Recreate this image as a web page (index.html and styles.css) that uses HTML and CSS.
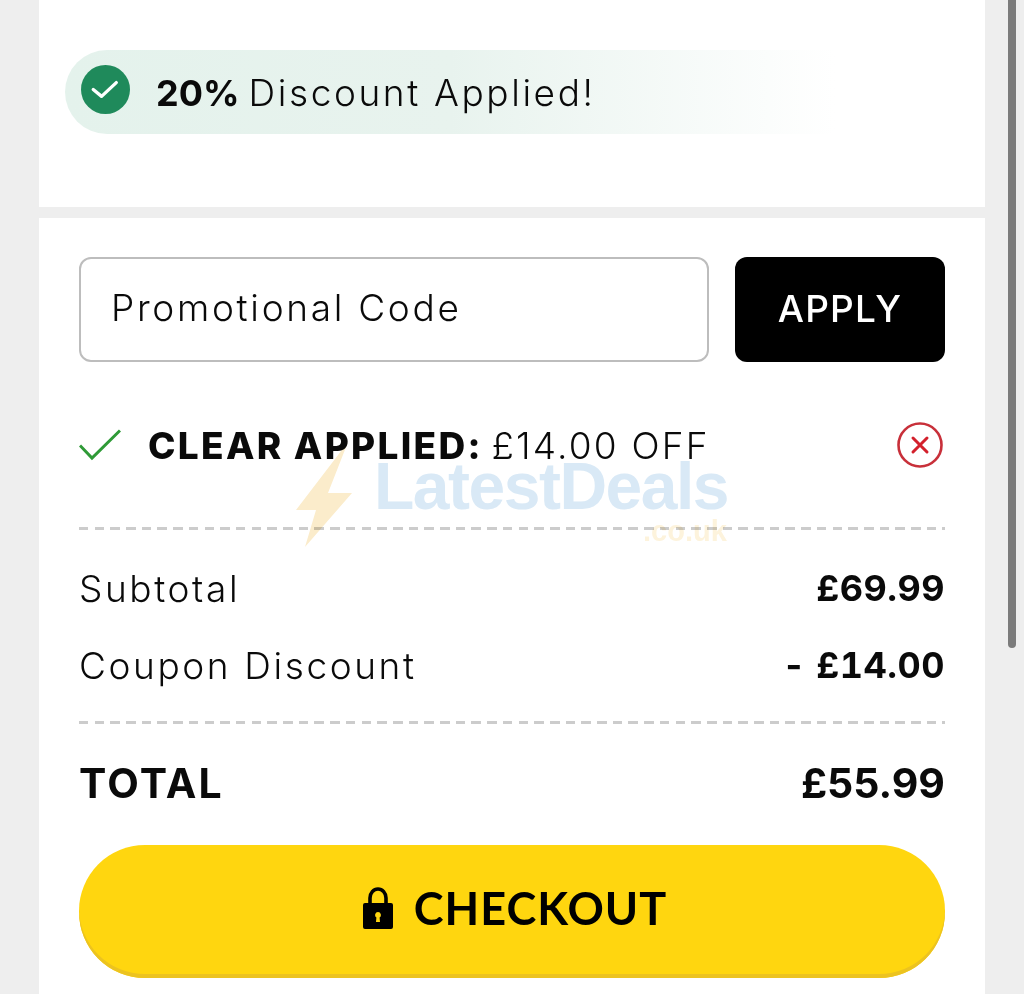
FILE: index.html
```html
<!DOCTYPE html>
<html lang="en">
<head>
<meta charset="utf-8">
<title>Basket</title>
<link rel="stylesheet" href="styles.css">
</head>
<body>
<main class="page">
  <section class="card card-top">
    <div class="discount-pill">
      <svg class="pill-icon" viewBox="0 0 50 50" aria-hidden="true">
        <circle cx="25" cy="25" r="25" fill="#1f8a5b"/>
        <path d="M12.500 25L21 32l15-14" fill="none" stroke="#fff" stroke-width="3.400" stroke-linecap="round" stroke-linejoin="round"/>
      </svg>
      <span class="pill-text"><b>20%</b> Discount Applied!</span>
    </div>
  </section>

  <section class="card card-summary">
    <div class="promo-row">
      <div class="promo-input">Promotional Code</div>
      <button class="promo-apply" type="button">APPLY</button>
    </div>

    <div class="applied-row">
      <svg class="applied-tick" viewBox="0 0 42 32" aria-hidden="true">
        <path d="M1 16.500L13 29 41 1.500" fill="none" stroke="#2f9a37" stroke-width="3"/>
      </svg>
      <span class="applied-text"><b>CLEAR APPLIED:</b> £14.00 OFF</span>
      <svg class="applied-remove" viewBox="0 0 46 46" aria-hidden="true">
        <circle cx="23" cy="23" r="21.500" fill="none" stroke="#c8303a" stroke-width="2.600"/>
        <path d="M16 16l14 14M30 16L16 30" fill="none" stroke="#d3202c" stroke-width="3" stroke-linecap="round"/>
      </svg>
    </div>

    <div class="rule rule-first"></div>

    <div class="line line-subtotal"><span>Subtotal</span><b>£69.99</b></div>
    <div class="line line-coupon"><span>Coupon Discount</span><b>- £14.00</b></div>

    <div class="rule rule-second"></div>

    <div class="total"><b class="total-label">TOTAL</b><b>£55.99</b></div>

    <button class="checkout" type="button">
      <svg class="lock" viewBox="0 0 30 42" aria-hidden="true">
        <path d="M7 18V11a8 9 0 0 1 16 0v7" fill="none" stroke="#000" stroke-width="3.600"/>
        <path fill-rule="evenodd" d="M2 16h26a2 2 0 0 1 2 2v22a2 2 0 0 1-2 2H2a2 2 0 0 1-2-2V18a2 2 0 0 1 2-2zm13 9a3 3 0 0 0-1.600 5.500L13 35h4l-.4-4.500A3 3 0 0 0 15 25z" fill="#000"/>
      </svg>
      <span>CHECKOUT</span>
    </button>
  </section>
</main>

<div class="watermark" aria-hidden="true">
  <svg class="wm-bolt" viewBox="0 0 58 106">
    <path d="M53 0L1 68h20L10 105 57 51H33z" fill="#fbeccb"/>
  </svg>
  <div class="wm-name">LatestDeals</div>
  <div class="wm-domain">.co.uk</div>
</div>

<div class="scroll-thumb"></div>
</body>
</html>
```

FILE: styles.css
```css
* {
  box-sizing: border-box;
}

html,
body {
  margin: 0;
  height: 994px;
  overflow: hidden;
}

body {
  background: #eeeeee;
  color: #0a0a0a;
  font-family: "Inter", "Noto Sans", sans-serif;
  position: relative;
}

b {
  font-weight: 700;
}

.page {
  padding: 0 39px;
  display: flex;
  flex-direction: column;
  gap: 11px;
}

.card {
  background: #fff;
}

/* Discount banner */
.card-top {
  height: 207px;
  padding: 50px 0 0 26px;
}

.discount-pill {
  width: 770px;
  height: 84px;
  border-radius: 42px 0 0 42px;
  background: linear-gradient(90deg, #e4f2ec 0%, #e8f3ee 50%, #ffffff 100%);
  display: flex;
  align-items: center;
  gap: 26px;
  padding-left: 16px;
}

.pill-icon {
  width: 49px;
  height: 49px;
  flex: none;
  margin-bottom: 5px;
}

.pill-text {
  font-size: 37px;
  font-weight: 300;
  letter-spacing: 2.6px;
  white-space: nowrap;
}

.pill-text b {
  font-size: 36px;
  letter-spacing: 0;
  margin-right: -4px;
}

/* Promo code */
.card-summary {
  height: 776px;
  padding: 39px 40px 0;
  display: flex;
  flex-direction: column;
}

.promo-row {
  display: flex;
  justify-content: space-between;
  height: 105px;
}

.promo-input {
  width: 630px;
  border: 2px solid #bdbdbd;
  border-radius: 12px;
  display: flex;
  align-items: center;
  padding: 0 0 4px 30px;
  font-size: 37px;
  font-weight: 300;
  letter-spacing: 2.7px;
}

.promo-apply {
  width: 210px;
  border: 0;
  border-radius: 12px;
  background: #000;
  color: #fff;
  font-family: "Inter", sans-serif;
  font-size: 37px;
  font-weight: 500;
  letter-spacing: 1.2px;
  padding: 0 0 2px;
}

/* Applied coupon */
.applied-row {
  display: flex;
  align-items: center;
  height: 46px;
  margin-top: 60px;
}

.applied-tick {
  width: 42px;
  height: 32px;
  flex: none;
}

.applied-text {
  font-size: 37px;
  font-weight: 300;
  letter-spacing: 2.2px;
  margin-left: 27px;
  white-space: nowrap;
}

.applied-text b {
  font-weight: 800;
  letter-spacing: 2.3px;
  margin-right: -4px;
}

.applied-remove {
  width: 46px;
  height: 46px;
  flex: none;
  margin-left: auto;
  margin-right: 2px;
}

/* Dashed divider with long, widely spaced dashes */
.rule {
  height: 3px;
  background: repeating-linear-gradient(90deg, #cccccc 0 9.500px, transparent 9.500px 15.700px);
}

.rule-first {
  margin-top: 59px;
}

.rule-second {
  margin-top: 32px;
}

/* Totals */
.line {
  display: flex;
  justify-content: space-between;
  align-items: center;
  font-size: 37px;
  font-weight: 300;
  letter-spacing: 2.6px;
  height: 48px;
}

.line b {
  font-size: 36px;
  letter-spacing: 0.5px;
  font-variant-numeric: tabular-nums;
}

.line-subtotal {
  margin-top: 34px;
}

.line-coupon {
  margin-top: 29px;
}

.total {
  display: flex;
  justify-content: space-between;
  align-items: center;
  font-size: 41px;
  height: 56px;
  margin-top: 31px;
}

.total-label {
  letter-spacing: 2.2px;
}

/* Checkout button */
.checkout {
  margin-top: 34px;
  height: 133px;
  border: 0;
  border-radius: 66px;
  background: #ffd60f;
  box-shadow: inset 0 -4px 0 #ecc320;
  color: #000;
  display: flex;
  align-items: center;
  justify-content: center;
  gap: 21px;
  font-family: "Lato", sans-serif;
  font-size: 45px;
  font-weight: 700;
  letter-spacing: 1px;
  padding: 0 0 8px 6px;
}

.lock {
  width: 30px;
  height: 42px;
  flex: none;
}

/* Brand mark laid over the page */
.watermark {
  position: absolute;
  left: 295px;
  top: 442px;
  width: 440px;
  height: 106px;
  pointer-events: none;
}

.wm-bolt {
  position: absolute;
  left: 0;
  top: 0;
  width: 58px;
  height: 106px;
  mix-blend-mode: multiply;
}

.wm-name {
  position: absolute;
  left: 79px;
  top: 8px;
  font-family: "Liberation Sans", sans-serif;
  font-size: 66px;
  font-weight: 700;
  letter-spacing: -1.500px;
  color: #d9e9f6;
  mix-blend-mode: multiply;
  line-height: 72px;
}

.wm-domain {
  position: absolute;
  left: 348px;
  top: 74px;
  font-family: "Liberation Sans", sans-serif;
  font-size: 29px;
  font-weight: 700;
  color: #fdf3dc;
  mix-blend-mode: multiply;
  line-height: 30px;
}

/* Overlay scrollbar */
.scroll-thumb {
  position: absolute;
  left: 1008px;
  top: 0;
  width: 8px;
  height: 648px;
  background: #7b7b7b;
  border-radius: 0 0 4px 4px;
}
```
